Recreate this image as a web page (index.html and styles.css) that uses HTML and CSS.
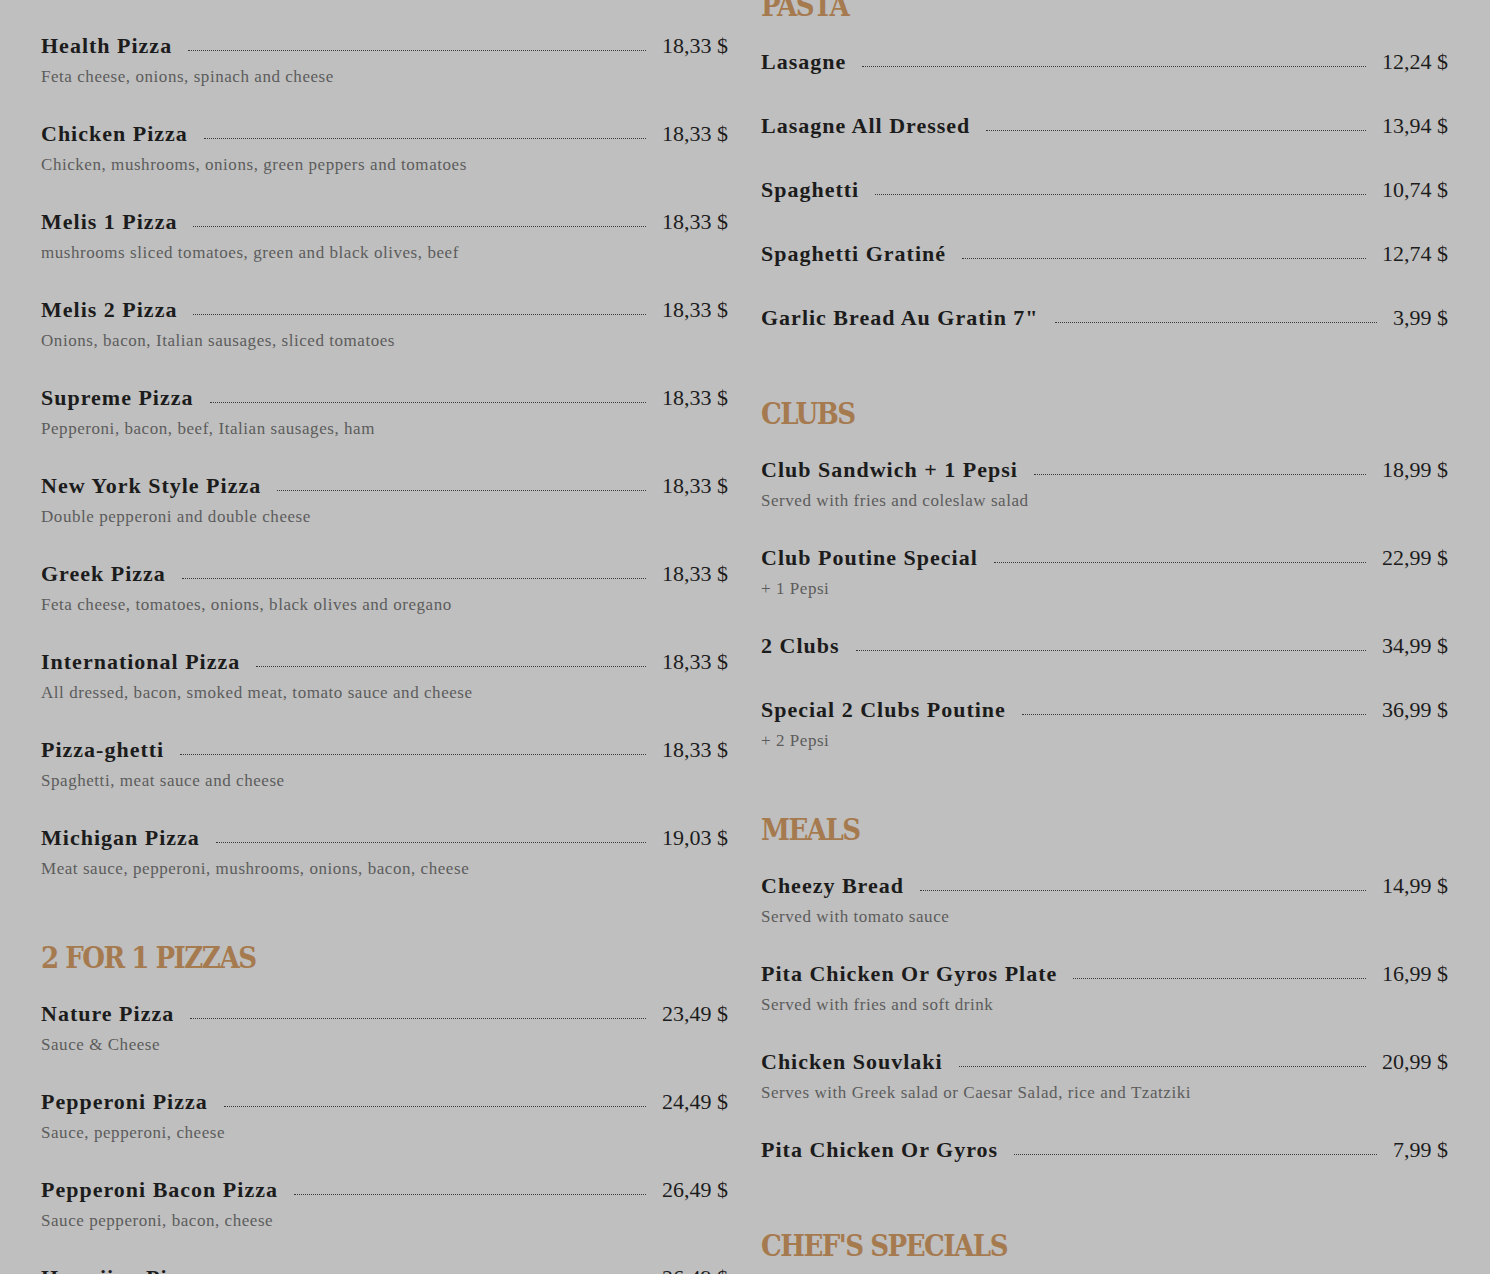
FILE: index.html
```html
<!DOCTYPE html>
<html lang="en">
<head>
<meta charset="utf-8">
<title>Menu</title>
<link rel="stylesheet" href="styles.css">
</head>
<body>
<main class="menu">
  <div class="col col-left">
    <section class="section">
      <div class="item">
        <div class="item-head"><span class="name">Vegetarian Pizza</span><span class="leader"></span><span class="price">18,33 $</span></div>
        <p class="desc">Green peppers, mushrooms, onions, tomatoes and cheese</p>
      </div>
      <div class="item">
        <div class="item-head"><span class="name">Health Pizza</span><span class="leader"></span><span class="price">18,33 $</span></div>
        <p class="desc">Feta cheese, onions, spinach and cheese</p>
      </div>
      <div class="item">
        <div class="item-head"><span class="name">Chicken Pizza</span><span class="leader"></span><span class="price">18,33 $</span></div>
        <p class="desc">Chicken, mushrooms, onions, green peppers and tomatoes</p>
      </div>
      <div class="item">
        <div class="item-head"><span class="name">Melis 1 Pizza</span><span class="leader"></span><span class="price">18,33 $</span></div>
        <p class="desc">mushrooms sliced tomatoes, green and black olives, beef</p>
      </div>
      <div class="item">
        <div class="item-head"><span class="name">Melis 2 Pizza</span><span class="leader"></span><span class="price">18,33 $</span></div>
        <p class="desc">Onions, bacon, Italian sausages, sliced tomatoes</p>
      </div>
      <div class="item">
        <div class="item-head"><span class="name">Supreme Pizza</span><span class="leader"></span><span class="price">18,33 $</span></div>
        <p class="desc">Pepperoni, bacon, beef, Italian sausages, ham</p>
      </div>
      <div class="item">
        <div class="item-head"><span class="name">New York Style Pizza</span><span class="leader"></span><span class="price">18,33 $</span></div>
        <p class="desc">Double pepperoni and double cheese</p>
      </div>
      <div class="item">
        <div class="item-head"><span class="name">Greek Pizza</span><span class="leader"></span><span class="price">18,33 $</span></div>
        <p class="desc">Feta cheese, tomatoes, onions, black olives and oregano</p>
      </div>
      <div class="item">
        <div class="item-head"><span class="name">International Pizza</span><span class="leader"></span><span class="price">18,33 $</span></div>
        <p class="desc">All dressed, bacon, smoked meat, tomato sauce and cheese</p>
      </div>
      <div class="item">
        <div class="item-head"><span class="name">Pizza-ghetti</span><span class="leader"></span><span class="price">18,33 $</span></div>
        <p class="desc">Spaghetti, meat sauce and cheese</p>
      </div>
      <div class="item">
        <div class="item-head"><span class="name">Michigan Pizza</span><span class="leader"></span><span class="price">19,03 $</span></div>
        <p class="desc">Meat sauce, pepperoni, mushrooms, onions, bacon, cheese</p>
      </div>
    </section>
    <section class="section">
      <h2 class="section-title">2 FOR 1 PIZZAS</h2>
      <div class="item">
        <div class="item-head"><span class="name">Nature Pizza</span><span class="leader"></span><span class="price">23,49 $</span></div>
        <p class="desc">Sauce &amp; Cheese</p>
      </div>
      <div class="item">
        <div class="item-head"><span class="name">Pepperoni Pizza</span><span class="leader"></span><span class="price">24,49 $</span></div>
        <p class="desc">Sauce, pepperoni, cheese</p>
      </div>
      <div class="item">
        <div class="item-head"><span class="name">Pepperoni Bacon Pizza</span><span class="leader"></span><span class="price">26,49 $</span></div>
        <p class="desc">Sauce pepperoni, bacon, cheese</p>
      </div>
      <div class="item">
        <div class="item-head"><span class="name">Hawaiian Pizza</span><span class="leader"></span><span class="price">26,49 $</span></div>
        <p class="desc">Sauce, ham, pineapple, cheese</p>
      </div>
    </section>
  </div>

  <div class="col col-right">
    <section class="section">
      <h2 class="section-title">PASTA</h2>
      <div class="item">
        <div class="item-head"><span class="name">Lasagne</span><span class="leader"></span><span class="price">12,24 $</span></div>
      </div>
      <div class="item">
        <div class="item-head"><span class="name">Lasagne All Dressed</span><span class="leader"></span><span class="price">13,94 $</span></div>
      </div>
      <div class="item">
        <div class="item-head"><span class="name">Spaghetti</span><span class="leader"></span><span class="price">10,74 $</span></div>
      </div>
      <div class="item">
        <div class="item-head"><span class="name">Spaghetti Gratiné</span><span class="leader"></span><span class="price">12,74 $</span></div>
      </div>
      <div class="item">
        <div class="item-head"><span class="name">Garlic Bread Au Gratin 7"</span><span class="leader"></span><span class="price">3,99 $</span></div>
      </div>
    </section>
    <section class="section">
      <h2 class="section-title">CLUBS</h2>
      <div class="item">
        <div class="item-head"><span class="name">Club Sandwich + 1 Pepsi</span><span class="leader"></span><span class="price">18,99 $</span></div>
        <p class="desc">Served with fries and coleslaw salad</p>
      </div>
      <div class="item">
        <div class="item-head"><span class="name">Club Poutine Special</span><span class="leader"></span><span class="price">22,99 $</span></div>
        <p class="desc">+ 1 Pepsi</p>
      </div>
      <div class="item">
        <div class="item-head"><span class="name">2 Clubs</span><span class="leader"></span><span class="price">34,99 $</span></div>
      </div>
      <div class="item">
        <div class="item-head"><span class="name">Special 2 Clubs Poutine</span><span class="leader"></span><span class="price">36,99 $</span></div>
        <p class="desc">+ 2 Pepsi</p>
      </div>
    </section>
    <section class="section">
      <h2 class="section-title">MEALS</h2>
      <div class="item">
        <div class="item-head"><span class="name">Cheezy Bread</span><span class="leader"></span><span class="price">14,99 $</span></div>
        <p class="desc">Served with tomato sauce</p>
      </div>
      <div class="item">
        <div class="item-head"><span class="name">Pita Chicken Or Gyros Plate</span><span class="leader"></span><span class="price">16,99 $</span></div>
        <p class="desc">Served with fries and soft drink</p>
      </div>
      <div class="item">
        <div class="item-head"><span class="name">Chicken Souvlaki</span><span class="leader"></span><span class="price">20,99 $</span></div>
        <p class="desc">Serves with Greek salad or Caesar Salad, rice and Tzatziki</p>
      </div>
      <div class="item">
        <div class="item-head"><span class="name">Pita Chicken Or Gyros</span><span class="leader"></span><span class="price">7,99 $</span></div>
      </div>
    </section>
    <section class="section">
      <h2 class="section-title">CHEF'S SPECIALS</h2>
      <div class="item">
        <div class="item-head"><span class="name">Steak &amp; Fries</span><span class="leader"></span><span class="price">24,99 $</span></div>
      </div>
    </section>
  </div>
</main>
</body>
</html>
```

FILE: styles.css
```css
html, body {
  margin: 0;
  padding: 0;
  background: #bfbfbf;
}

body {
  font-family: "Liberation Serif", "DejaVu Serif", serif;
  color: #1c1c1c;
}

.menu {
  display: grid;
  grid-template-columns: 687px 687px;
  column-gap: 33px;
  padding: 0 42px 0 41px;
  margin-top: -58px;
}

.col {
  display: flex;
  flex-direction: column;
}

.col-right {
  padding-top: 16px;
}

.section-title {
  margin: 28px 0 20px;
  font-family: "DejaVu Serif", serif;
  font-stretch: condensed;
  font-weight: bold;
  font-size: 29px;
  line-height: 40px;
  color: #a67a4f;
  letter-spacing: -1.5px;
}

.item {
  margin-bottom: 32px;
}

.item-head {
  display: flex;
  align-items: flex-start;
  height: 32px;
  line-height: 32px;
}

.name {
  font-weight: bold;
  font-size: 22px;
  letter-spacing: 1px;
  white-space: nowrap;
}

.leader {
  flex: 1;
  height: 0;
  margin: 20px 16px 0;
  border-bottom: 1px dotted #3a3a3a;
}

.price {
  font-size: 22px;
  white-space: nowrap;
}

.desc {
  margin: 6px 0 0;
  height: 18px;
  line-height: 18px;
  font-size: 17px;
  letter-spacing: 0.55px;
  color: #5c5c5c;
}
```
